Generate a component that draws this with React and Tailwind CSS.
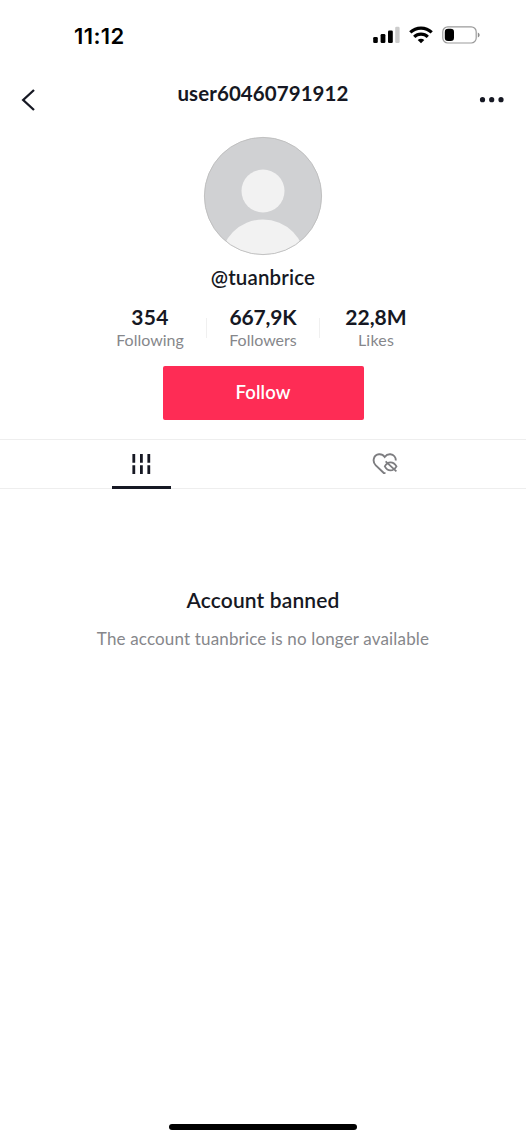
const stats = [
  { value: "354", label: "Following", valueClass: "tracking-[0.3px]", labelClass: "tracking-[0px]" },
  { value: "667,9K", label: "Followers", valueClass: "tracking-[-0.2px]", labelClass: "tracking-[0px]" },
  { value: "22,8M", label: "Likes", valueClass: "tracking-[0px]", labelClass: "tracking-[0.2px]" },
];

function StatusBar() {
  return (
    <div className="flex h-[70px] items-center justify-between pl-[74px] pr-[45px]">
      <span className="mt-[2px] font-['Inter',sans-serif] text-[22px] leading-[26px] font-semibold tracking-[0.4px] text-black">11:12</span>
      <div className="flex items-center">
        <svg width="28" height="18" viewBox="0 0 28 18">
          <rect x="1.2" y="11" width="4.6" height="6" rx="1.3" fill="#000" />
          <rect x="8.6" y="8" width="4.8" height="9" rx="1.3" fill="#000" />
          <rect x="16" y="4.5" width="4.8" height="12.5" rx="1.3" fill="#000" />
          <rect x="23.2" y="0.8" width="4.4" height="16.2" rx="1.3" fill="#ccc" />
        </svg>
        <svg className="ml-[9px]" width="24" height="18" viewBox="0 0 24 18" fill="none" stroke="#000" strokeWidth="3.2">
          <path d="M1.3 6.3C7.2 0.6 16.8 0.6 22.7 6.3" />
          <path d="M5.2 10.8C9 7.2 15 7.2 18.8 10.8" />
          <path d="M12 17.2L8.7 14C10.5 12.3 13.5 12.3 15.3 14Z" fill="#000" stroke="none" />
        </svg>
        <svg className="ml-[9px]" width="39" height="18" viewBox="0 0 39 18">
          <rect x="0.8" y="0.8" width="33.4" height="16.2" rx="5" fill="none" stroke="#9b9b9b" strokeWidth="1.2" />
          <rect x="2.8" y="2.8" width="9.2" height="12.2" rx="3.3" fill="#000" />
          <path d="M35.8 6.5C38.2 7.3 38.2 10.7 35.8 11.5Z" fill="#8b8b8b" />
        </svg>
      </div>
    </div>
  );
}

function Header() {
  return (
    <header className="flex h-[60px] items-center justify-between pl-[21px] pr-[21px]">
      <button aria-label="Back">
        <svg width="26" height="24" viewBox="0 0 26 24" fill="none" stroke="#161823" strokeWidth="2.3">
          <path d="M13 2L2.2 12L13 22" />
        </svg>
      </button>
      <h1 className="mb-[14px] text-[20.5px] leading-6 font-bold tracking-[0.07px]">user60460791912</h1>
      <button aria-label="More">
        <svg width="26" height="8" viewBox="0 0 26 8" fill="#161823">
          <circle cx="3.5" cy="3.7" r="2.6" />
          <circle cx="12.7" cy="3.7" r="2.6" />
          <circle cx="22" cy="3.7" r="2.6" />
        </svg>
      </button>
    </header>
  );
}

function Avatar() {
  return (
    <svg className="mx-auto mt-[6px] block" width="120" height="120" viewBox="0 0 120 120">
      <defs>
        <clipPath id="avatar">
          <circle cx="60" cy="60" r="58.8" />
        </clipPath>
      </defs>
      <circle cx="60" cy="60" r="58.8" fill="#d0d1d3" />
      <g clipPath="url(#avatar)" fill="#f2f2f2">
        <circle cx="60" cy="55" r="21.5" />
        <circle cx="60" cy="126" r="42.5" />
      </g>
      <circle cx="60" cy="60" r="58.6" fill="none" stroke="#bdbdbd" strokeWidth="0.9" />
    </svg>
  );
}

function Tabs() {
  return (
    <div className="mt-[19px] grid h-[50px] grid-cols-[282px_1fr] border-y border-[#eeeeee]">
      <div className="flex justify-center">
        <div className="-mb-px flex w-[59px] items-center justify-center border-b-[3px] border-[#161823] pt-[2px]">
          <svg width="20" height="20" viewBox="0 0 20 20" stroke="#161823" strokeWidth="2.8">
            <path d="M2.8 0V8.8M10.4 0V8.8M17.8 0V8.8M2.8 11.2V20M10.4 11.2V20M17.8 11.2V20" />
          </svg>
        </div>
      </div>
      <div className="flex items-center pl-[90px]">
        <svg width="27" height="24" viewBox="0 0 27 24" fill="none" stroke="#7d7d80" strokeWidth="1.9">
          <path d="M13.5 21.1L11.8 21L3.8 13.4C-0.2 9.2 1.7 2.7 7 2.3C9.4 2.1 11.4 3.2 12.7 5C14.1 3.1 16.1 2.1 18.4 2.3C21.7 2.6 23.9 5.2 23.8 8.5" />
          <path d="M12.8 14.4C15.7 9 21.3 9 24.5 14.4C21.3 19.8 15.7 19.8 12.8 14.4Z" strokeWidth="1.8" />
          <path d="M13.6 9.4L24.4 19.4" strokeWidth="1.8" />
        </svg>
      </div>
    </div>
  );
}

export default function App() {
  return (
    <div className="flex h-[1140px] w-[526px] flex-col overflow-hidden bg-white font-['Lato',sans-serif] text-[#161823]">
      <StatusBar />
      <Header />
      <Avatar />

      <p className="mt-[8px] text-center text-[20.5px] leading-[26px] font-semibold tracking-[0.15px]">@tuanbrice</p>

      {/* Stats */}
      <div className="mx-auto mt-[14px] grid grid-cols-[113px_113px_113px] text-center">
        {stats.map((s, i) => (
          <div key={s.label} className="relative">
            <div className={`text-[21px] leading-[26px] font-bold ${s.valueClass}`}>{s.value}</div>
            <div className={`mb-[2px] text-[16px] leading-5 text-[#86878b] ${s.labelClass}`}>{s.label}</div>
            {i > 0 && <span className="absolute top-[14px] -left-px h-5 w-px bg-[#f0f0f0]" />}
          </div>
        ))}
      </div>

      <button className="mx-auto mt-[14px] h-[54px] w-[201px] shrink-0 rounded-[2px] bg-[#fe2c55] text-[18.5px] font-semibold tracking-[0.15px] text-white">
        Follow
      </button>

      <Tabs />

      <div className="mt-[98px] text-center">
        <h2 className="text-[21px] leading-[26px] font-semibold tracking-[0.13px]">Account banned</h2>
        <p className="mt-[14px] text-[17px] leading-[24px] tracking-[0.16px] text-[#86878b]">The account tuanbrice is no longer available</p>
      </div>

      <div className="mx-auto mt-auto mb-[10px] h-[6px] w-[188px] rounded-full bg-black" />
    </div>
  );
}
